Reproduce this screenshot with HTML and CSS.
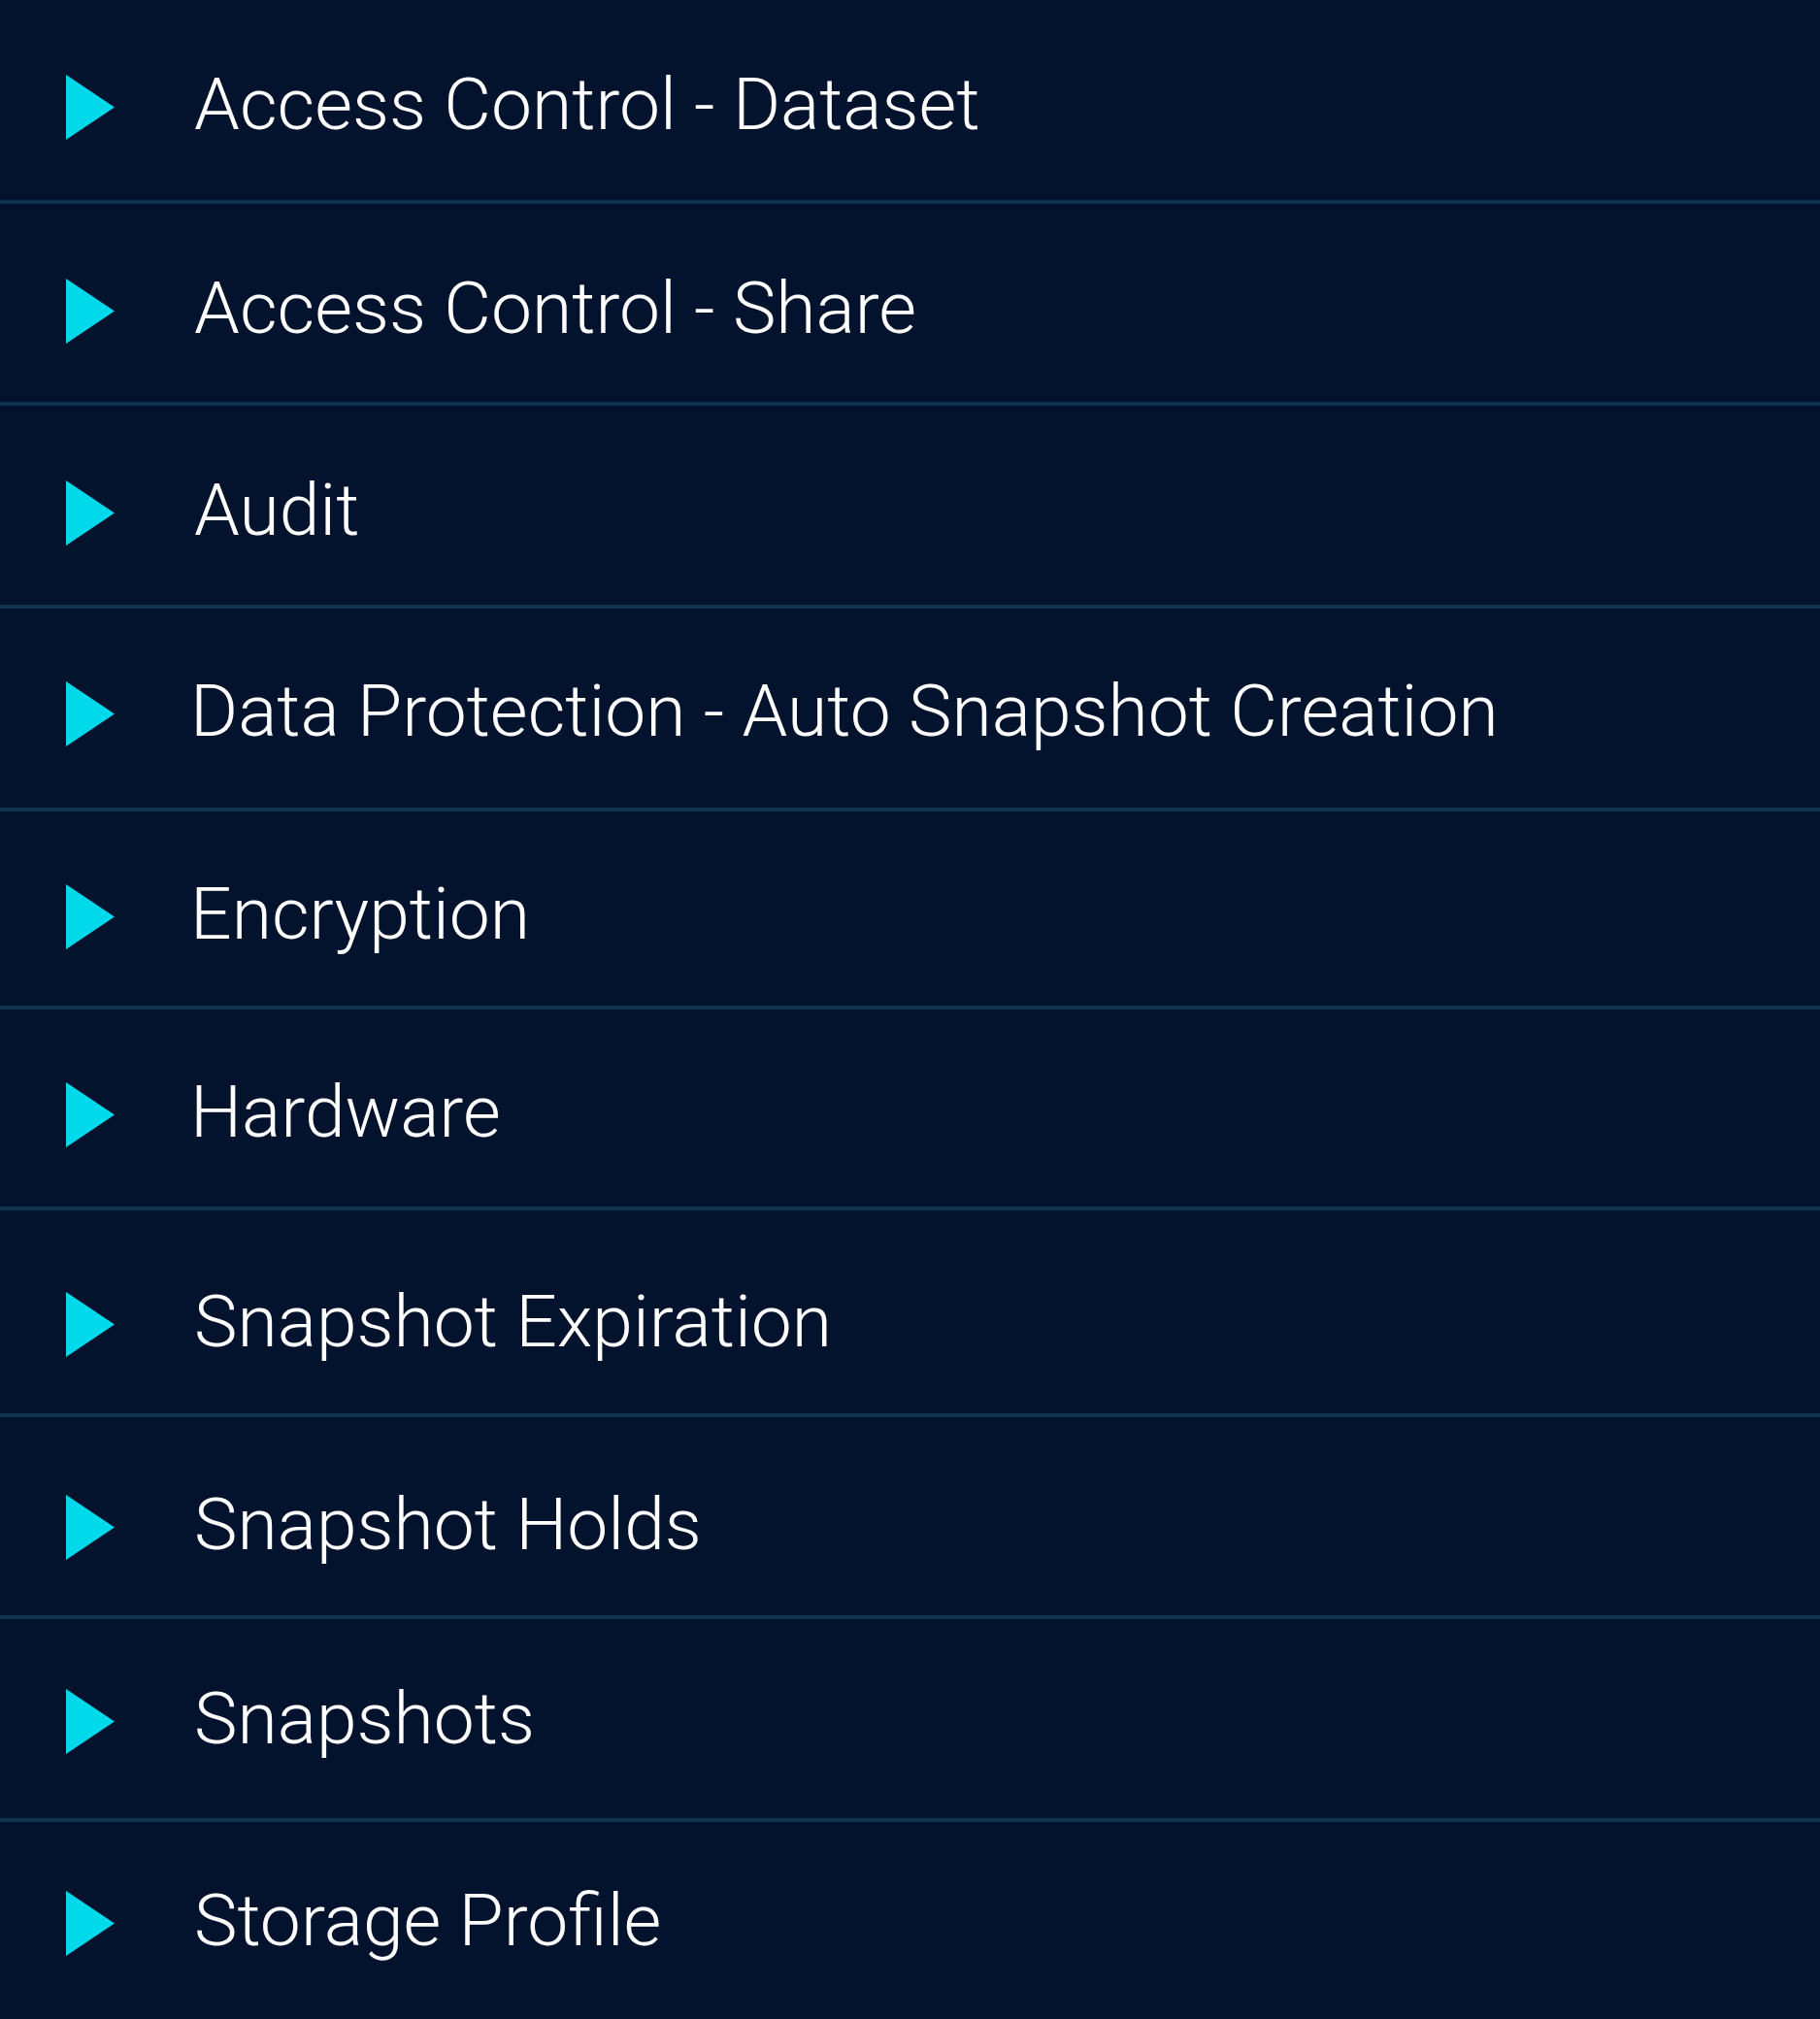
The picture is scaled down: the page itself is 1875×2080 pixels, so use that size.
FILE: index.html
```html
<!DOCTYPE html>
<html lang="en">
<head>
<meta charset="utf-8">
<title>Policy categories</title>
<link rel="stylesheet" href="styles.css">
</head>
<body>
<ul class="tree">
  <li class="row"><svg class="caret" viewBox="0 0 50 67"><polygon points="0,0 50,33.5 0,67"/></svg><span class="label">Access Control - Dataset</span></li>
  <li class="row"><svg class="caret" viewBox="0 0 50 67"><polygon points="0,0 50,33.5 0,67"/></svg><span class="label">Access Control - Share</span></li>
  <li class="row"><svg class="caret" viewBox="0 0 50 67"><polygon points="0,0 50,33.5 0,67"/></svg><span class="label">Audit</span></li>
  <li class="row"><svg class="caret" viewBox="0 0 50 67"><polygon points="0,0 50,33.5 0,67"/></svg><span class="label label--tight">Data Protection - Auto Snapshot Creation</span></li>
  <li class="row"><svg class="caret" viewBox="0 0 50 67"><polygon points="0,0 50,33.5 0,67"/></svg><span class="label label--tight">Encryption</span></li>
  <li class="row"><svg class="caret" viewBox="0 0 50 67"><polygon points="0,0 50,33.5 0,67"/></svg><span class="label label--tight">Hardware</span></li>
  <li class="row"><svg class="caret" viewBox="0 0 50 67"><polygon points="0,0 50,33.5 0,67"/></svg><span class="label">Snapshot Expiration</span></li>
  <li class="row"><svg class="caret" viewBox="0 0 50 67"><polygon points="0,0 50,33.5 0,67"/></svg><span class="label">Snapshot Holds</span></li>
  <li class="row"><svg class="caret" viewBox="0 0 50 67"><polygon points="0,0 50,33.5 0,67"/></svg><span class="label">Snapshots</span></li>
  <li class="row"><svg class="caret" viewBox="0 0 50 67"><polygon points="0,0 50,33.5 0,67"/></svg><span class="label">Storage Profile</span></li>
</ul>
</body>
</html>
```

FILE: styles.css
```css
html, body {
  margin: 0;
  padding: 0;
  background: #04132d;
}

body {
  font-family: Roboto, "Liberation Sans", sans-serif;
  color: #ffffff;
  height: 2080px;
  overflow: hidden;
}

.tree {
  list-style: none;
  margin: 0;
  padding: 0;
  display: flex;
  flex-direction: column;
}

.row {
  box-sizing: border-box;
  height: 208px;
  padding: 77px 0 0 68px;
  display: flex;
  align-items: flex-start;
  border-bottom: 4px solid #0e344b;
}

.row:nth-child(1)  { height: 210px; padding-top: 77px; }
.row:nth-child(2)  { height: 208px; padding-top: 77px; }
.row:nth-child(3)  { height: 209px; padding-top: 77px; }
.row:nth-child(4)  { height: 209px; padding-top: 75px; }
.row:nth-child(5)  { height: 204px; padding-top: 75px; }
.row:nth-child(6)  { height: 207px; padding-top: 75px; }
.row:nth-child(7)  { height: 213px; padding-top: 84px; }
.row:nth-child(8)  { height: 208px; padding-top: 80px; }
.row:nth-child(9)  { height: 209px; padding-top: 72px; }
.row:nth-child(10) { height: 203px; padding-top: 71px; border-bottom: none; }

.caret {
  width: 50px;
  height: 67px;
  flex: none;
  fill: #00d9e9;
}

.label {
  margin: -3px 0 0 82px;
  font-size: 75px;
  font-weight: 300;
  line-height: 67px;
  white-space: nowrap;
}

.label--tight {
  margin-left: 78px;
}
```
